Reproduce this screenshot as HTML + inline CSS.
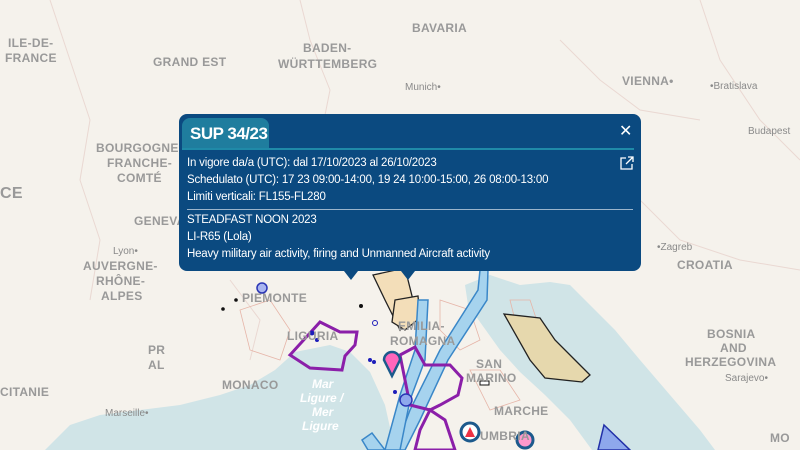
<!DOCTYPE html>
<html><head><meta charset="utf-8"><style>
*{margin:0;padding:0;box-sizing:border-box}
body{width:800px;height:450px;overflow:hidden;background:#f5f2ec;font-family:"Liberation Sans",sans-serif;position:relative}
svg{position:absolute;left:0;top:0}
.lbl{font-family:"Liberation Sans",sans-serif;font-weight:bold;fill:#999;font-size:12px;letter-spacing:0.3px}
.sm{font-family:"Liberation Sans",sans-serif;fill:#8a8a8a;font-size:10px}
#pop{position:absolute;left:179px;top:114px;width:462px;height:157px;background:#0b4a80;border-radius:8px;color:#fff}
#tab{position:absolute;left:3px;top:4px;width:87px;height:31px;background:#1f7d9e;border-radius:8px 8px 0 0;font-weight:bold;font-size:17px;padding:6px 0 0 8px;letter-spacing:-0.5px}
#tl{position:absolute;left:3px;top:34px;width:452px;height:2px;background:#1f8aa8}
#x{position:absolute;left:440px;top:7px;font-size:16px}
.tx{position:absolute;left:8px;font-size:11.5px;line-height:17px;letter-spacing:-0.2px}
#hr{position:absolute;left:8px;top:95px;width:446px;height:1px;background:#9bb5cc}
.tri{position:absolute;top:157px;width:0;height:0;border-left:7px solid transparent;border-right:7px solid transparent;border-top:9px solid #0b4a80}
</style></head><body>
<svg width="800" height="450" viewBox="0 0 800 450">
<path d="M45,450 L70,425 100,415 140,410 180,405 220,395 250,385 275,370 295,352 330,345 350,352 370,372 385,405 395,450Z" fill="#d0e4e7"/>
<path d="M465,285 L490,275 520,285 550,282 570,285 590,305 615,330 640,360 670,395 700,430 715,450 L592,450 570,420 545,395 520,372 500,350 480,322 468,305Z" fill="#d0e4e7"/>
<g stroke="#ead8d2" stroke-width="1" fill="none">
<path d="M50,0 L70,60 90,120 80,180 100,240 90,300"/><path d="M300,0 L310,40 330,90 320,140"/><path d="M560,40 L600,80 640,110 700,120"/><path d="M700,0 L720,60 760,120 800,160"/><path d="M640,200 L680,240 740,260 800,270"/><path d="M230,280 L260,320 250,360"/>
</g>
<g stroke="#e6b5a8" stroke-width="0.8" fill="none">
<path d="M240,310 L270,300 290,330 280,360 250,350Z"/><path d="M440,300 L470,310 480,340 460,350 440,330Z"/><path d="M510,300 L530,300 540,330 520,340Z"/><path d="M470,370 L500,370 520,400 490,410Z"/>
</g>
<path d="M373,275 L405,268 413,300 400,330 385,300Z" fill="#f3deb9" stroke="#222" stroke-width="1.3"/>
<path d="M395,300 L418,296 420,318 405,330 392,322Z" fill="#f3deb9" stroke="#222" stroke-width="1.3"/>
<path d="M504,314 L540,318 555,340 575,360 590,375 582,382 545,378 530,360Z" fill="#e6d8ad" stroke="#222" stroke-width="1.3"/>
<path d="M480,270 L488,270 487,300 448,360 420,420 405,450 395,450 410,410 440,350 478,290Z" fill="#a6d3ee" stroke="#3a87c8" stroke-width="1.5"/>
<path d="M418,300 L428,300 425,360 410,400 400,450 385,450 400,395 415,350Z" fill="#a6d3ee" stroke="#3a87c8" stroke-width="1.5"/>
<path d="M362,440 L372,433 385,450 368,450Z" fill="#a6d3ee" stroke="#3a87c8" stroke-width="1.5"/>
<path d="M290,355 L320,322 340,332 357,332 355,345 345,356 342,370 310,368Z" fill="none" stroke="#8b1fa9" stroke-width="3"/>
<path d="M400,355 L415,347 425,365 450,365 462,378 458,395 440,405 430,410 410,405 Z" fill="none" stroke="#8b1fa9" stroke-width="3"/>
<path d="M420,430 L430,410 445,420 455,450 415,450Z" fill="none" stroke="#8b1fa9" stroke-width="3"/>
<path d="M604,425 L630,450 598,450Z" fill="#8ea8ec" stroke="#2230a8" stroke-width="1.5"/>
<circle cx="262" cy="288" r="5" fill="#a9b5f0" stroke="#2b36b5" stroke-width="1.5"/>
<circle cx="406" cy="400" r="6" fill="#8ea8ec" stroke="#2b36b5" stroke-width="1.5"/>
<circle cx="470" cy="432" r="9" fill="#fff" stroke="#1c5a8c" stroke-width="3"/><path d="M465,437 L470,427 475,437Z" fill="#e34"/>
<circle cx="525" cy="440" r="8" fill="#f9c" stroke="#1c5a8c" stroke-width="3"/>
<path d="M384,360 A8,8 0 1,1 400,360 L392,376Z" fill="#f6b" stroke="#1c5a8c" stroke-width="2.5"/>
<g fill="#1d1dba"><circle cx="312" cy="333" r="2.5"/><circle cx="317" cy="340" r="2"/><circle cx="370" cy="360" r="2"/><circle cx="374" cy="362" r="2"/><circle cx="375" cy="323" r="2.5" fill="none" stroke="#1d1dba"/><circle cx="395" cy="392" r="2"/></g>
<g fill="#111"><circle cx="236" cy="300" r="1.8"/><circle cx="223" cy="309" r="1.8"/><circle cx="361" cy="306" r="2"/></g>
<rect x="480" y="381" width="9" height="4" fill="#fff" stroke="#111"/>
<text class="lbl" x="8" y="47">ILE-DE-</text><text class="lbl" x="5" y="62">FRANCE</text>
<text class="lbl" x="153" y="66">GRAND EST</text>
<text class="lbl" x="303" y="52">BADEN-</text><text class="lbl" x="278" y="68">WÜRTTEMBERG</text>
<text class="lbl" x="412" y="32">BAVARIA</text>
<text class="sm" x="405" y="90">Munich•</text>
<text class="lbl" x="622" y="85">VIENNA•</text><text class="sm" x="710" y="89">•Bratislava</text>
<text class="sm" x="748" y="134">Budapest</text>
<text class="lbl" x="96" y="152">BOURGOGNE-</text><text class="lbl" x="107" y="167">FRANCHE-</text><text class="lbl" x="117" y="182">COMTÉ</text>
<text class="lbl" x="0" y="198" style="font-size:16px">CE</text>
<text class="lbl" x="134" y="225">GENEVA</text>
<text class="sm" x="113" y="254">Lyon•</text>
<text class="lbl" x="83" y="270">AUVERGNE-</text><text class="lbl" x="96" y="285">RHÔNE-</text><text class="lbl" x="101" y="300">ALPES</text>
<text class="lbl" x="242" y="302">PIEMONTE</text>
<text class="lbl" x="287" y="340">LIGURIA</text>
<text class="lbl" x="398" y="330">EMILIA-</text><text class="lbl" x="390" y="345">ROMAGNA</text>
<text class="lbl" x="222" y="389">MONACO</text>
<text class="lbl" x="476" y="368">SAN</text><text class="lbl" x="466" y="382">MARINO</text>
<text class="lbl" x="494" y="415">MARCHE</text>
<text class="lbl" x="480" y="440">UMBRIA</text>
<text class="lbl" x="0" y="396">CITANIE</text>
<text class="sm" x="105" y="416">Marseille•</text>
<text class="sm" x="657" y="250">•Zagreb</text>
<text class="lbl" x="677" y="269">CROATIA</text>
<text class="lbl" x="707" y="338">BOSNIA</text><text class="lbl" x="720" y="352">AND</text><text class="lbl" x="685" y="366">HERZEGOVINA</text>
<text class="sm" x="725" y="381">Sarajevo•</text>
<text class="lbl" x="148" y="354">PR</text><text class="lbl" x="148" y="369">AL</text>
<text class="lbl" x="770" y="442">MO</text>
<text x="312" y="388" style="font:italic bold 12px 'Liberation Sans';fill:#fff">Mar</text>
<text x="300" y="402" style="font:italic bold 12px 'Liberation Sans';fill:#fff">Ligure /</text>
<text x="312" y="416" style="font:italic bold 12px 'Liberation Sans';fill:#fff">Mer</text>
<text x="302" y="430" style="font:italic bold 12px 'Liberation Sans';fill:#fff">Ligure</text>
</svg>
<div id="pop">
<div id="tab">SUP 34/23</div>
<div id="tl"></div>
<div id="x">✕</div>
<svg style="left:440px;top:41px;position:absolute" width="16" height="16" viewBox="0 0 16 16"><path d="M7,3 H2 V14 H13 V9 M9,2 H14 V7 M14,2 L7,9" fill="none" stroke="#fff" stroke-width="1.3"/></svg>
<div class="tx" style="top:41px">In vigore da/a (UTC): dal 17/10/2023 al 26/10/2023<br>Schedulato (UTC): 17 23 09:00-14:00, 19 24 10:00-15:00, 26 08:00-13:00<br>Limiti verticali: FL155-FL280</div>
<div id="hr"></div>
<div class="tx" style="top:98px">STEADFAST NOON 2023<br>LI-R65 (Lola)<br>Heavy military air activity, firing and Unmanned Aircraft activity</div>
<div class="tri" style="left:165px"></div>
<div class="tri" style="left:222px"></div>
</div>
</body></html>
